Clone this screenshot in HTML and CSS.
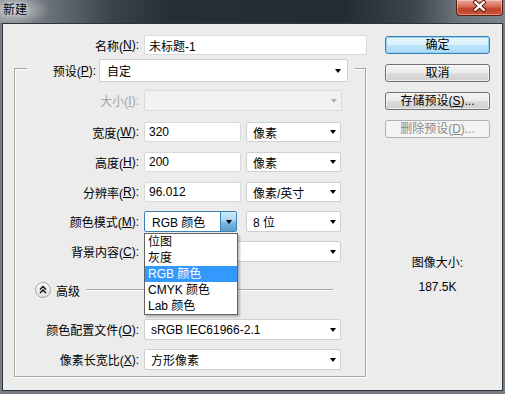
FILE: index.html
```html
<!DOCTYPE html>
<html lang="zh-CN">
<head>
    <meta charset="UTF-8">
    <title>新建</title>
    <link rel="stylesheet" href="styles.css">
</head>
<body>
<div class="window">
    <div class="titlebar">
        <span class="title">新建</span>
        <span class="close">
            <svg width="47" height="16" viewBox="0 0 47 16">
                <path d="M19 3 L28 11 M28 3 L19 11" stroke="#5a1a10" stroke-width="4.5" stroke-linecap="round"/>
                <path d="M19 3 L28 11 M28 3 L19 11" stroke="#fff" stroke-width="2.4" stroke-linecap="round"/>
            </svg>
        </span>
    </div>

    <div class="dialog">
        <div class="form">
            <div class="row name-row">
                <label class="lbl lbl-top">名称(<u>N</u>):</label>
                <div class="input name-input">未标题-1</div>
            </div>

            <div class="group">
                <div class="preset-row">
                    <label class="lbl preset-lbl">预设(<u>P</u>):</label>
                    <div class="select preset-select"><span class="val">自定</span><span class="arrow"></span></div>
                </div>

                <div class="row size-row">
                    <label class="lbl disabled">大小(<u>I</u>):</label>
                    <div class="select select-disabled wide"><span class="val"></span><span class="arrow"></span></div>
                </div>

                <div class="row gap-11">
                    <label class="lbl">宽度(<u>W</u>):</label>
                    <div class="input num">320</div>
                    <div class="select unit"><span class="val">像素</span><span class="arrow"></span></div>
                </div>

                <div class="row gap-10">
                    <label class="lbl">高度(<u>H</u>):</label>
                    <div class="input num">200</div>
                    <div class="select unit"><span class="val">像素</span><span class="arrow"></span></div>
                </div>

                <div class="row gap-10">
                    <label class="lbl">分辨率(<u>R</u>):</label>
                    <div class="input num">96.012</div>
                    <div class="select unit"><span class="val">像素/英寸</span><span class="arrow"></span></div>
                </div>

                <div class="row gap-9 tall">
                    <label class="lbl">颜色模式(<u>M</u>):</label>
                    <div class="mode-wrap">
                        <div class="select mode-select"><span class="val">RGB 颜色</span><span class="drop-btn"><span class="arrow"></span></span></div>
                        <ul class="drop-list">
                            <li>位图</li>
                            <li>灰度</li>
                            <li class="active">RGB 颜色</li>
                            <li>CMYK 颜色</li>
                            <li>Lab 颜色</li>
                        </ul>
                    </div>
                    <div class="select unit bits"><span class="val">8 位</span><span class="arrow"></span></div>
                </div>

                <div class="row gap-9 tall">
                    <label class="lbl">背景内容(<u>C</u>):</label>
                    <div class="select wide"><span class="val"></span><span class="arrow"></span></div>
                </div>

                <div class="advanced">
                    <svg class="adv-icon" width="16" height="16" viewBox="0 0 16 16">
                        <defs>
                            <linearGradient id="advg" x1="0" y1="0" x2="0" y2="1">
                                <stop offset="0" stop-color="#ffffff"/>
                                <stop offset="1" stop-color="#dcdcdc"/>
                            </linearGradient>
                        </defs>
                        <circle cx="8" cy="8" r="7.5" fill="url(#advg)" stroke="#a6a6a6"/>
                        <path d="M5 7.5 L8 4.5 L11 7.5 M5 11 L8 8 L11 11" fill="none" stroke="#111" stroke-width="1.5"/>
                    </svg>
                    <span class="adv-text">高级</span>
                    <span class="adv-line"></span>
                </div>

                <div class="row gap-21 tall">
                    <label class="lbl">颜色配置文件(<u>O</u>):</label>
                    <div class="select wide"><span class="val">sRGB IEC61966-2.1</span><span class="arrow"></span></div>
                </div>

                <div class="row gap-9 tall">
                    <label class="lbl">像素长宽比(<u>X</u>):</label>
                    <div class="select wide"><span class="val">方形像素</span><span class="arrow"></span></div>
                </div>
            </div>
        </div>

        <div class="side">
            <button class="btn btn-default">确定</button>
            <button class="btn">取消</button>
            <button class="btn">存储预设(<u>S</u>)...</button>
            <button class="btn" disabled>删除预设(<u>D</u>)...</button>

            <div class="image-size">
                <p>图像大小:</p>
                <p class="size-val">187.5K</p>
            </div>
        </div>
    </div>
</div>
</body>
</html>
```

FILE: styles.css
```css
* {
    box-sizing: border-box;
}
html, body {
    margin: 0;
    padding: 0;
}
body {
    width: 505px;
    height: 394px;
    overflow: hidden;
    font-family: "Liberation Sans", "Noto Sans CJK SC", sans-serif;
    font-size: 12px;
    color: #000;
}
u {
    text-decoration: underline;
    text-underline-offset: 1px;
}

/* window frame */
.window {
    width: 505px;
    height: 394px;
    background: #767c83;
    padding: 0 2px 3px;
    display: flex;
    flex-direction: column;
}
.titlebar {
    height: 23px;
    margin: 0 -2px;
    display: flex;
    justify-content: space-between;
    align-items: flex-start;
    background:
        radial-gradient(ellipse 34px 16px at 16px 10px, rgba(255,255,255,0.55), rgba(255,255,255,0) 100%),
        linear-gradient(to right, #8a8f95 0%, #6e747b 9%, #3b434c 22%, #262e38 34%, #232b35 68%, #3d454e 82%, #6f757c 91%, #7d838a 100%);
}
.title {
    padding: 3px 0 0 3px;
    line-height: 15px;
    text-shadow: 0 0 5px rgba(255,255,255,0.8);
}
.close {
    width: 47px;
    height: 16px;
    margin-right: 2px;
    border: 1px solid #5c1f16;
    border-top: none;
    border-radius: 0 0 4px 4px;
    background: linear-gradient(#e9a99a 0%, #d8705c 40%, #c2432c 60%, #c9553d 100%);
    box-shadow: inset 0 0 0 1px rgba(255,255,255,0.35);
    display: flex;
    align-items: center;
    justify-content: center;
}
.close svg {
    display: block;
    margin-top: -1px;
}

.dialog {
    flex: 1;
    border: 1px solid #2e343b;
    background: #ececec;
    display: flex;
    padding: 11px 0 0 11px;
}

/* left form */
.form {
    width: 353px;
}
.row {
    display: flex;
    align-items: stretch;
    height: 20px;
}
.row.tall {
    height: 21px;
}
.gap-9 { margin-top: 9px; }
.gap-10 { margin-top: 10px; }
.gap-11 { margin-top: 11px; }
.gap-21 { margin-top: 21px; }

.lbl {
    width: 124px;
    margin-right: 5px;
    text-align: right;
    white-space: nowrap;
    display: flex;
    align-items: center;
    justify-content: flex-end;
}
.lbl-top {
    width: 125px;
}
.lbl.disabled {
    color: #a3a3a3;
}

.input {
    background: #fff;
    border: 1px solid #d9d9d9;
    border-radius: 2px;
    padding: 0 4px;
    display: flex;
    align-items: center;
    white-space: nowrap;
}
.name-input {
    width: 223px;
}
.num {
    width: 97px;
}

.select {
    background: #fff;
    border: 1px solid #cfcfcf;
    border-radius: 2px;
    padding: 0 4px 0 6px;
    display: flex;
    align-items: center;
    white-space: nowrap;
}
.select .val {
    flex: 1;
}
.arrow {
    width: 0;
    height: 0;
    border-style: solid;
    border-width: 4px 3.5px 0;
    border-color: #000 transparent transparent;
}
.unit {
    width: 95px;
    margin-left: 5px;
}
.bits {
    margin-left: 9px;
}
.wide {
    width: 197px;
}
.select-disabled {
    width: 198px;
    background: #f2f2f2;
    border-color: #dadada;
}
.select-disabled .arrow {
    border-top-color: #b0b0b0;
}

/* group box */
.group {
    width: 352px;
    margin-top: 13px;
    border: 1px solid #a6a6a6;
    box-shadow: 1px 1px 0 #fff, inset 1px 1px 0 #fff;
    padding-bottom: 6px;
}
.preset-row {
    display: flex;
    height: 23px;
    margin: -10px 0 0 12px;
    width: 328px;
    padding-right: 7px;
    background: #ececec;
}
.preset-lbl {
    width: 69px;
    margin-right: 3px;
}
.preset-select {
    width: 249px;
    padding: 0 6px 0 7px;
}
.size-row {
    margin-top: 8px;
    height: 21px;
}

/* colour mode select, opened */
.mode-wrap {
    position: relative;
    width: 93px;
}
.mode-select {
    width: 93px;
    height: 100%;
    border-color: #3c7fb1;
    padding: 0 0 0 7px;
}
.drop-btn {
    width: 16px;
    height: 100%;
    border-left: 1px solid #3c7fb1;
    background: linear-gradient(#cfe9f9 0%, #a9d6f3 45%, #7ab7e2 55%, #5e9fd0 100%);
    display: flex;
    align-items: center;
    justify-content: center;
}
.drop-list {
    position: absolute;
    top: 100%;
    left: 0;
    width: 94px;
    margin: 1px 0 0;
    padding: 0;
    list-style: none;
    background: #fff;
    border: 1px solid #646464;
    box-shadow: 2px 2px 2px rgba(0,0,0,0.25);
    z-index: 2;
}
.drop-list li {
    height: 16px;
    line-height: 16px;
    padding-left: 3px;
    white-space: nowrap;
}
.drop-list li.active {
    background: #3399ff;
    color: #fff;
}

/* advanced toggle */
.advanced {
    display: flex;
    align-items: center;
    height: 16px;
    margin-top: 20px;
    padding-left: 20px;
    padding-right: 32px;
}
.adv-icon {
    display: block;
}
.adv-text {
    margin-left: 5px;
}
.adv-line {
    flex: 1;
    margin-left: 6px;
    border-top: 1px solid #a6a6a6;
    border-bottom: 1px solid #fff;
}

/* right column */
.side {
    width: 105px;
    margin-left: 18px;
    padding-top: 1px;
    display: flex;
    flex-direction: column;
}
.btn {
    height: 18px;
    margin: 0 0 10px;
    padding: 0;
    font: inherit;
    color: #000;
    border: 1px solid #707070;
    border-radius: 3px;
    background: linear-gradient(#f3f3f3 0%, #ebebeb 48%, #dddddd 52%, #cfcfcf 100%);
    box-shadow: inset 0 0 0 1px rgba(255,255,255,0.6);
    line-height: 14px;
}
.btn-default {
    border-color: #3c7fb1;
    background: linear-gradient(#eaf6fd 0%, #d9f0fc 48%, #bee6fd 52%, #a7d9f5 100%);
    box-shadow: inset 0 0 0 1px #8fd3f6;
}
.btn:disabled {
    color: #8a8a8a;
    border-color: #adb2b5;
    background: #f4f4f4;
    box-shadow: none;
}
.image-size {
    margin-top: 107px;
    text-align: center;
}
.image-size p {
    margin: 0;
    line-height: 16px;
}
.image-size .size-val {
    margin-top: 8px;
}
```
